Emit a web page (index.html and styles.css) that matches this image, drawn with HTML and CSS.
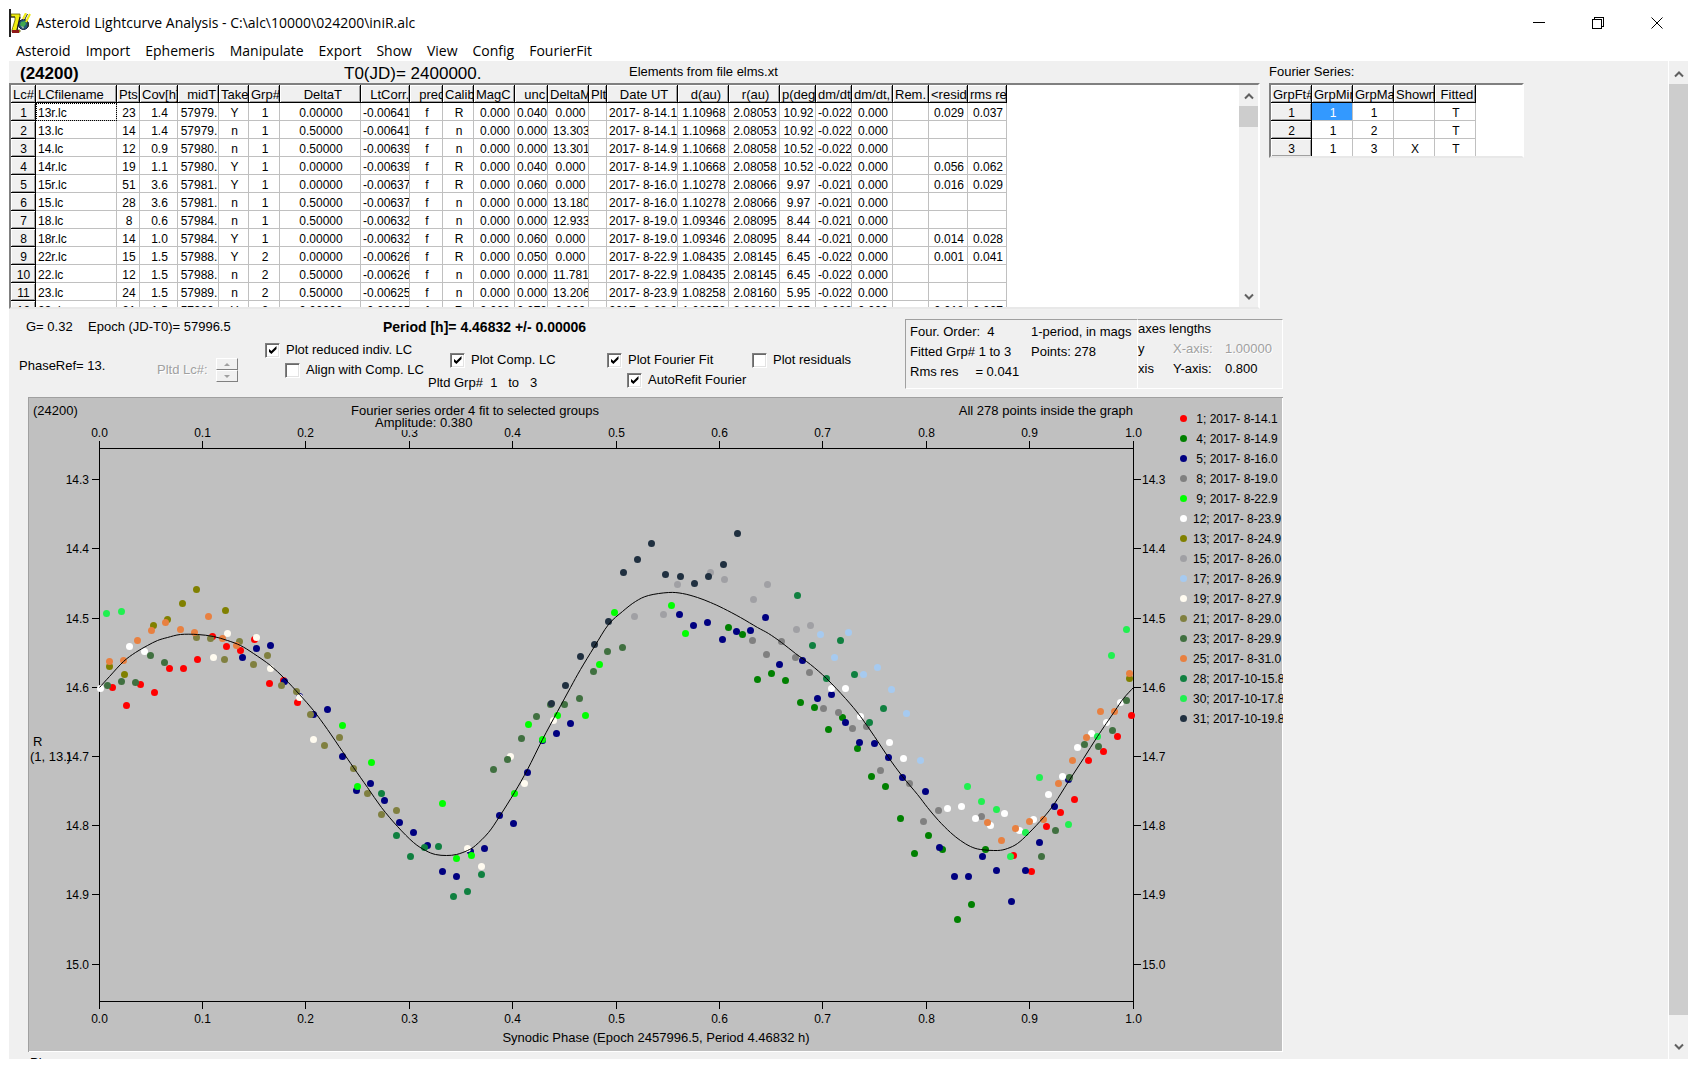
FILE: index.html
```html
<!DOCTYPE html>
<html lang="en">
<head>
<meta charset="utf-8">
<title>Asteroid Lightcurve Analysis</title>
<link rel="stylesheet" href="styles.css">
</head>
<body>
<div class="window">
  <header class="titlebar">
    <svg class="app-icon" width="20" height="20" viewBox="0 0 20 20" aria-hidden="true">
      <path d="M0 1h9v3L6 17h3v2H1v-2l3-10V4H0z" fill="#f0ec10" stroke="#606000" stroke-width=".8"/>
      <path d="M1 17h7v3H1z" fill="#901818"/>
      <path d="M2 14h4v2H2z" fill="#f0ec10"/>
      <path d="M0 4h4M6 17l3-13" fill="none" stroke="#202020" stroke-width="1.2"/>
      <circle cx="12.500" cy="11.500" r="5" fill="#205878" stroke="#101030"/>
      <path d="M10 9l4-1 1 3-3 4-3-3z" fill="#40a850"/>
      <path d="M10 13l3 1-1 2z" fill="#b0b0b0"/>
      <path d="M12 6l3-6M15 9l4-8" fill="none" stroke="#f0ec10" stroke-width="2"/>
      <path d="M13.500 7l3-6M17 9v5" fill="none" stroke="#303018" stroke-width="1"/>
    </svg>
    <h1 class="title">Asteroid Lightcurve Analysis - C:\alc\10000\024200\iniR.alc</h1>
    <div class="window-buttons">
      <button class="window-button" aria-label="Minimize"><svg width="12" height="12" viewBox="0 0 12 12"><path d="M0 5.500h12"/></svg></button>
      <button class="window-button" aria-label="Restore"><svg width="12" height="12" viewBox="0 0 12 12"><path d="M.5 2.500h9v9h-9zM2.500 2.500v-2h9v9h-2"/></svg></button>
      <button class="window-button" aria-label="Close"><svg width="12" height="12" viewBox="0 0 12 12"><path class="smooth" d="M.5.5l11 11M11.500.5l-11 11"/></svg></button>
    </div>
  </header>
  <nav class="menu">
    <button>Asteroid</button><button>Import</button><button>Ephemeris</button><button>Manipulate</button><button>Export</button><button>Show</button><button>View</button><button>Config</button><button>FourierFit</button>
  </nav>
  <div class="workspace">
    <main class="content">
      <div class="tables">
        <section class="lc-panel">
          <div class="lc-heading">
            <strong>(24200)</strong>
            <span>T0(JD)= 2400000.</span>
            <span class="elements">Elements from file elms.xt</span>
          </div>
          <div class="frame lc-frame">
            <div class="lc-view"><table class="grid lc-grid" id="lc-grid"></table></div>
            <div class="scrollbar">
              <button aria-label="Scroll up"><svg width="10" height="8" viewBox="0 0 10 8"><path d="M1 6.500l4-4 4 4"/></svg></button>
              <div class="thumb lc-thumb"></div>
              <button class="down" aria-label="Scroll down"><svg width="10" height="8" viewBox="0 0 10 8"><path d="M1 1.500l4 4 4-4"/></svg></button>
            </div>
          </div>
        </section>
        <section class="fs-panel">
          <div class="fs-heading">Fourier Series:</div>
          <div class="frame fs-frame">
            <table class="grid fs-grid">
              <thead><tr><th>GrpFt#</th><th>GrpMin</th><th>GrpMax</th><th>Shown</th><th> Fitted</th></tr></thead>
              <tbody>
                <tr><th>1</th><td class="selected">1</td><td>1</td><td></td><td>T</td></tr>
                <tr><th>2</th><td>1</td><td>2</td><td></td><td>T</td></tr>
                <tr><th>3</th><td>1</td><td>3</td><td>X</td><td>T</td></tr>
              </tbody>
            </table>
          </div>
        </section>
      </div>

      <section class="controls">
        <div class="settings">
          <div class="summary">
            <span class="g">G= 0.32</span>
            <span class="epoch">Epoch (JD-T0)= 57996.5</span>
            <strong class="period">Period [h]= 4.46832 +/- 0.00006</strong>
          </div>
          <div class="options">
            <span class="phase-ref">PhaseRef= 13.</span>
            <div class="lc-number">
              <span class="disabled">Pltd Lc#:</span>
              <div class="spinner">
                <button disabled aria-label="Next"><svg width="6" height="3" viewBox="0 0 6 3"><path d="M3 0l3 3H0z"/></svg></button>
                <button disabled aria-label="Previous"><svg width="6" height="3" viewBox="0 0 6 3"><path d="M0 0h6L3 3z"/></svg></button>
              </div>
            </div>
            <div class="stack reduced">
              <label><input type="checkbox" checked>Plot reduced indiv. LC</label>
              <label class="indent"><input type="checkbox">Align with Comp. LC</label>
            </div>
            <div class="stack lower comp">
              <label class="indent"><input type="checkbox" checked>Plot Comp. LC</label>
              <span class="groups">Pltd Grp#  1   to   3</span>
            </div>
            <div class="stack lower fourier">
              <label><input type="checkbox" checked>Plot Fourier Fit</label>
              <label class="indent"><input type="checkbox" checked>AutoRefit Fourier</label>
            </div>
            <div class="stack lower">
              <label><input type="checkbox">Plot residuals</label>
            </div>
          </div>
        </div>
        <div class="fit-info">
          <span>Four. Order:  4</span><span>1-period, in mags</span>
          <span>Fitted Grp# 1 to 3</span><span>Points: 278</span>
          <span class="rms">Rms res<span>= 0.041</span></span>
        </div>
        <div class="axes-info">
          <span class="axes-title">axes lengths</span>
          <span>y</span><span class="disabled">X-axis:</span><span class="disabled">1.00000</span>
          <span>xis</span><span>Y-axis:</span><span>0.800</span>
        </div>
      </section>

      <svg class="chart" id="chart" width="1255" height="655" viewBox="28 397 1255 655" role="img" aria-label="Composite lightcurve">
        <text x="33" y="415">(24200)</text>
        <text x="475" y="415" text-anchor="middle">Fourier series order 4 fit to selected groups</text>
        <text x="1133" y="415" text-anchor="end">All 278 points inside the graph</text>
        <g id="axes"></g>
        <rect x="372" y="415" width="102" height="15" fill="#c0c0c0"/>
        <text x="375" y="427">Amplitude: 0.380</text>
        <text x="33" y="746">R</text>
        <rect x="30" y="750" width="37" height="16" fill="#c0c0c0"/>
        <text x="30" y="761">(1, 13.)</text>
        <text x="656" y="1042" text-anchor="middle">Synodic Phase (Epoch 2457996.5, Period 4.46832 h)</text>
        <g id="points"></g>
        <path id="fit" class="fit"/>
      </svg>
      <div class="footnote">Phase</div>
    </main>
    <div class="scrollbar main-scroll">
      <button aria-label="Page up"><svg width="10" height="8" viewBox="0 0 10 8"><path d="M1 6.500l4-4 4 4"/></svg></button>
      <div class="thumb"></div>
      <button class="down" aria-label="Page down"><svg width="10" height="8" viewBox="0 0 10 8"><path d="M1 1.500l4 4 4-4"/></svg></button>
    </div>
  </div>
</div>
<script src="app.js"></script>
</body>
</html>
```
FILE: styles.css
```css
* { box-sizing: border-box; }
body {
  margin: 0;
  background: #fff;
  color: #000;
  font: 13px/16px "Liberation Sans", Arial, sans-serif;
}
button {
  margin: 0;
  padding: 0;
  border: 0;
  background: none;
  color: inherit;
  font: inherit;
}
.window {
  display: flex;
  flex-direction: column;
  height: 100vh;
  padding: 9px;
  overflow: hidden;
}

/* title bar and menu */
.titlebar {
  display: flex;
  align-items: center;
  height: 28px;
  border-left: 2px solid #222;
}
.title {
  flex: 1;
  margin: 0 0 0 5px;
  font: 14px/28px "Open Sans", "Noto Sans", sans-serif;
}
.window-buttons {
  display: flex;
  margin-right: 3px;
}
.window-button {
  display: grid;
  place-items: center;
  width: 59px;
  height: 28px;
}
.window-button path {
  fill: none;
  stroke: #000;
  shape-rendering: crispEdges;
}
.window-button .smooth { shape-rendering: auto; }
.menu {
  display: flex;
  gap: 15px;
  height: 24px;
  padding-left: 7px;
  font: 14px/28px "Open Sans", "Noto Sans", sans-serif;
}

.workspace {
  display: flex;
  flex: 1;
  min-height: 0;
  background: #f0f0f0;
}
.content {
  flex: 1;
  min-width: 0;
  overflow: hidden;
}

/* scroll bars */
.scrollbar {
  display: flex;
  flex-direction: column;
  flex: none;
  width: 19px;
  background: #f0f0f0;
}
.scrollbar button {
  display: grid;
  place-items: center;
  flex: none;
  height: 21px;
}
.scrollbar .down { margin-top: auto; }
.scrollbar path {
  fill: none;
  stroke: #606060;
  stroke-width: 2;
}
.thumb { background: #cdcdcd; }
.lc-thumb { height: 21px; }
.main-scroll {
  width: 21px;
  padding-top: 2px;
  border-left: 1px solid #fff;
  border-right: 1px solid #fff;
}
.main-scroll .thumb { flex: 1; }
.main-scroll .down {
  height: 24px;
  margin-top: 20px;
}

/* tables */
.tables {
  display: flex;
  gap: 9px;
}
.lc-panel { width: 1251px; }
.fs-panel { width: 255px; }
.lc-heading {
  display: grid;
  grid-template-columns: 324px 285px 1fr;
  height: 22px;
  padding-left: 11px;
  font-size: 17px;
  line-height: 25px;
}
.elements {
  font-size: 13px;
  line-height: 21px;
}
.fs-heading {
  height: 22px;
  line-height: 21px;
}
.frame {
  display: flex;
  background: #fff;
  border: 2px solid;
  border-color: #808080 #fff #e8e8e8 #808080;
}
.lc-frame { height: 226px; }
.fs-frame {
  height: 75px;
  overflow: hidden;
}
.lc-view {
  flex: 1;
  overflow: hidden;
}
.grid {
  border-collapse: separate;
  border-spacing: 0;
  table-layout: fixed;
  font-size: 12px;
}
.fs-grid { width: 205px; }
.lc-grid { width: 996px; }
.grid th, .grid td {
  height: 18px;
  padding: 3px 0 0 2px;
  overflow: hidden;
  font-weight: 400;
  line-height: 14px;
  text-align: center;
  white-space: pre;
  border: solid #c0c0c0;
  border-width: 0 1px 1px 0;
}
.grid th {
  padding-left: 1px;
  background: #f0f0f0;
  border-color: #000;
  box-shadow: inset 1px 1px #fff, inset -1px -1px #a0a0a0;
}
.grid thead th {
  padding-left: 2px;
  font-size: 13px;
  text-align: left;
}
.grid td.name { text-align: left; }
.grid td.delta { padding-left: 5px; }
.grid td.focus {
  outline: 1px dotted #000;
  outline-offset: -1px;
}
.grid td.selected {
  background: #3399ff;
  color: #fff;
}

/* controls */
.controls {
  display: flex;
  height: 88px;
}
.controls span, .controls label { white-space: pre; }
.settings { width: 896px; }
.summary {
  display: flex;
  padding: 10px 0 0 17px;
}
.g { width: 62px; }
.epoch { width: 295px; }
.period { font-size: 14px; }
.options {
  display: flex;
  padding: 7px 0 0 10px;
}
.phase-ref {
  width: 138px;
  padding-top: 16px;
}
.lc-number {
  display: flex;
  align-items: center;
  width: 108px;
  height: 56px;
}
.lc-number .disabled { width: 59px; }
.disabled {
  color: #a0a0a0;
  text-shadow: 1px 1px #fff;
}
.spinner { width: 22px; }
.spinner button {
  display: grid;
  place-items: center;
  width: 22px;
  height: 12px;
  border: 1px solid;
  border-color: #fff #808080 #808080 #fff;
}
.spinner path { fill: #a0a0a0; }
.stack {
  display: flex;
  flex-direction: column;
  gap: 4px;
}
.lower { padding-top: 10px; }
.reduced { width: 163px; }
.comp { width: 179px; }
.fourier { width: 145px; }
.indent { padding-left: 20px; }
.groups { padding-top: 3px; }
.comp .indent { padding-left: 22px; }
.stack label {
  display: flex;
  align-items: center;
  gap: 6px;
  height: 16px;
}
input[type="checkbox"] {
  flex: none;
  display: grid;
  place-items: center;
  width: 15px;
  height: 15px;
  margin: 0;
  appearance: none;
  background: #fff;
  border: 1px solid;
  border-color: #808080 #fff #fff #808080;
  box-shadow: inset 1px 1px #696969, inset -1px -1px #e3e3e3;
}
input[type="checkbox"]:checked::after {
  content: "";
  width: 8px;
  height: 8px;
  background: #000;
  clip-path: polygon(0 30%, 36% 62%, 100% 0, 100% 38%, 36% 100%, 0 68%);
}
.fit-info, .axes-info {
  display: grid;
  align-content: start;
  height: 70px;
  margin-top: 10px;
  border: 1px solid;
  border-color: #a0a0a0 #fff #fff #a0a0a0;
}
.fit-info {
  grid-template-columns: 121px 1fr;
  row-gap: 4px;
  width: 233px;
  padding: 4px 0 0 4px;
}
.rms { display: flex; }
.rms span { margin-left: 17px; }
.axes-info {
  grid-template-columns: 35px 52px 1fr;
  row-gap: 4px;
  width: 145px;
  padding-top: 1px;
  border-left: 0;
}
.axes-title { grid-column: 1 / -1; }

/* chart */
.chart {
  display: block;
  margin-left: 19px;
  background: #c0c0c0;
  box-shadow: inset 1px 1px #a0a0a0, inset -1px -1px #fff;
  font-size: 13px;
}
.chart text { white-space: pre; }
.chart .legend, .chart .tick { font-size: 12px; }
.axis {
  fill: none;
  stroke: #000;
  shape-rendering: crispEdges;
}
.fit {
  fill: none;
  stroke: #000;
}
.footnote { padding: 3px 0 0 21px; }
```
FILE: app.js
```js
const widths = [25, 81, 23, 38, 41, 30, 31, 81, 49, 33, 31, 41, 33, 41, 18, 71, 51, 51, 36, 36, 41, 36, 39, 39];
const heads = ["Lc#", "LCfilename", "Pts", "Cov[h]", "  midT", "Take", "Grp#", "      DeltaT", "  LtCorr.", "  pred", "Calib", "MagC", "  unc", "DeltaMag", "Plt", "   Date UT", "   d(au)", "   r(au)", "p(deg)", "dm/dt", "dm/dt,", "Rem.", "<resid>", "rms res"];
const rows = [
  "1|13r.lc|23|1.4|57979.|Y|1|0.00000|-0.00641|f|R|0.000|0.040|0.000||2017- 8-14.1|1.10968|2.08053|10.92|-0.022|0.000||0.029|0.037",
  "2|13.lc|14|1.4|57979.|n|1|0.50000|-0.00641|f|n|0.000|0.000|13.303||2017- 8-14.1|1.10968|2.08053|10.92|-0.022|0.000|||",
  "3|14.lc|12|0.9|57980.|n|1|0.50000|-0.00639|f|n|0.000|0.000|13.301||2017- 8-14.9|1.10668|2.08058|10.52|-0.022|0.000|||",
  "4|14r.lc|19|1.1|57980.|Y|1|0.00000|-0.00639|f|R|0.000|0.040|0.000||2017- 8-14.9|1.10668|2.08058|10.52|-0.022|0.000||0.056|0.062",
  "5|15r.lc|51|3.6|57981.|Y|1|0.00000|-0.00637|f|R|0.000|0.060|0.000||2017- 8-16.0|1.10278|2.08066|9.97|-0.021|0.000||0.016|0.029",
  "6|15.lc|28|3.6|57981.|n|1|0.50000|-0.00637|f|n|0.000|0.000|13.180||2017- 8-16.0|1.10278|2.08066|9.97|-0.021|0.000|||",
  "7|18.lc|8|0.6|57984.|n|1|0.50000|-0.00632|f|n|0.000|0.000|12.933||2017- 8-19.0|1.09346|2.08095|8.44|-0.021|0.000|||",
  "8|18r.lc|14|1.0|57984.|Y|1|0.00000|-0.00632|f|R|0.000|0.060|0.000||2017- 8-19.0|1.09346|2.08095|8.44|-0.021|0.000||0.014|0.028",
  "9|22r.lc|15|1.5|57988.|Y|2|0.00000|-0.00626|f|R|0.000|0.050|0.000||2017- 8-22.9|1.08435|2.08145|6.45|-0.022|0.000||0.001|0.041",
  "10|22.lc|12|1.5|57988.|n|2|0.50000|-0.00626|f|n|0.000|0.000|11.781||2017- 8-22.9|1.08435|2.08145|6.45|-0.022|0.000|||",
  "11|23.lc|24|1.5|57989.|n|2|0.50000|-0.00625|f|n|0.000|0.000|13.206||2017- 8-23.9|1.08258|2.08160|5.95|-0.022|0.000|||",
  "12|23r.lc|21|1.5|57989.|Y|2|0.00000|-0.00625|f|R|0.000|0.070|0.000||2017- 8-23.9|1.08258|2.08160|5.95|-0.022|0.000||0.018|0.027"
];
const esc = s => s.replace("<", "&lt;").replace(/>/g, "&gt;");
const cell = (text, i, r) => {
  if (i === 0) return `<th scope="row">${text}</th>`;
  let cls = i === 1 ? "name" : i === 13 ? "delta" : "";
  if (i === 1 && r === 0) cls += " focus";
  return `<td class="${cls}">${text}</td>`;
};
document.getElementById("lc-grid").innerHTML =
  `<colgroup>${widths.map(w => `<col style="width:${w}px">`).join("")}</colgroup>` +
  `<thead><tr>${heads.map(h => `<th>${esc(h).replace("&lt;resid&gt;", "&lt;resid&gt;")}</th>`).join("")}</tr></thead>` +
  `<tbody>${rows.map((row, r) => `<tr>${row.split("|").map((t, i) => cell(t, i, r)).join("")}</tr>`).join("")}</tbody>`;

/* axes */
const left = 99.5, right = 1133.5, upper = 448.5, lower = 1001.5;
let line = `M${left} ${upper}H${right}V${lower}H${left}Z`;
let labels = "";
for (let i = 0; i <= 10; i++) {
  const x = Math.floor(99 + i * 103.4) + 0.5;
  const t = (i / 10).toFixed(1);
  line += `M${x} 441V448M${x} 1002V1009`;
  labels += `<text class="tick" x="${x}" y="437" text-anchor="middle">${t}</text><text class="tick" x="${x}" y="1023" text-anchor="middle">${t}</text>`;
}
for (let i = 0; i < 8; i++) {
  const y = Math.floor(479.6 + i * 69.2) + 0.5;
  const t = (14.3 + i / 10).toFixed(1);
  line += `M92 ${y}H99M1134 ${y}H1141`;
  labels += `<text class="tick" x="89" y="${y + 4.5}" text-anchor="end">${t}</text><text class="tick" x="1142" y="${y + 4.5}">${t}</text>`;
}

/* observed points, one entry per session */
const series = [
  ["#ff0000", " 1; 2017- 8-14.1", "112,687 126,705 140,684 154,692 169,668 183,668 197,659 212,636 226,646 240,650 254,639 269,683 283,680 297,702 1013,855 1031,871 1046,826 1060,812 1074,799 1088,760 1103,751 1117,736 1131,715"],
  ["#008000", " 4; 2017- 8-14.9", "728,627 742,634 757,679 771,673 785,680 800,702 814,707 828,729 842,717 857,748 871,776 885,786 900,818 914,853 928,835 942,849 957,919 971,904 985,849"],
  ["#000080", " 5; 2017- 8-16.0", "242,657 256,648 270,645 284,681 299,696 313,714 327,709 342,756 356,790 370,783 384,800 399,822 413,832 427,845 442,871 456,876 470,851 484,848 499,815 513,823 527,772 542,740 556,733 570,723 679,614 693,625 707,622 722,639 736,631 750,630 765,617 779,664 802,660 817,698 831,694 845,722 859,742 874,743 888,757 902,777 925,791 939,847 954,876 968,876 982,856 996,870 1011,901 1025,870 1039,842 1054,806 1068,779"],
  ["#808080", " 8; 2017- 8-19.0", "752,640 766,654 781,641 795,657 809,672 823,708 838,712 852,728 866,726 880,770 909,783 923,821 938,810 981,816"],
  ["#00ff00", " 9; 2017- 8-22.9", "342,725 357,786 371,762 442,803 456,858 471,855 514,793 528,724 542,739 557,715 585,715 599,664 614,612 671,605 685,633"],
  ["#ffffff", "12; 2017- 8-23.9", "100,688 129,646 144,651 831,688 845,688 860,716 889,742 903,758 947,808 961,806 975,818 990,825 1004,813 1019,830 1033,819 1048,794 1062,776 1077,747 1091,733 1106,722 1120,702"],
  ["#808000", "13; 2017- 8-24.9", "109,666 124,674 153,625 167,619 182,603 196,589 225,610 1129,678"],
  ["#a0a0a4", "15; 2017- 8-26.0", "634,616 663,614 677,584 710,572 724,579 753,599 767,584 796,629 810,625"],
  ["#a6caf0", "17; 2017- 8-26.9", "820,634 834,657 848,632 863,674 877,667 891,689 906,713 920,760"],
  ["#fffbf0", "19; 2017- 8-27.9", "213,657 227,633 256,637 270,668 299,697 313,739 467,848 481,866 510,756 524,783 553,720"],
  ["#808040", "21; 2017- 8-29.0", "196,637 210,638 224,659 239,641 253,664 267,655 281,685 296,691 310,714 324,745 339,737 353,768 367,793 381,814 396,810"],
  ["#407040", "23; 2017- 8-29.9", "107,685 121,681 135,682 150,655 164,662 493,769 507,759 521,738 536,716 550,704 564,704 579,698 593,671 607,651 622,647 1041,856 1055,830 1069,777 1084,744 1098,746 1112,730 1126,700"],
  ["#e88040", "25; 2017- 8-31.0", "109,661 123,660 137,640 151,630 165,622 180,629 194,632 208,616 222,638 236,645 987,822 1001,840 1015,828 1029,821 1043,819 1058,783 1072,760 1086,737 1100,711 1114,711 1129,673"],
  ["#108040", "28; 2017-10-15.8", "381,793 396,835 410,856 424,847 438,846 453,896 467,891 481,874 797,595 812,645 826,678 840,640 854,674 869,722 883,708"],
  ["#20f050", "30; 2017-10-17.8", "106,613 121,611 967,786 981,801 996,809 1010,856 1025,832 1039,777 1068,824 1097,736 1111,655 1126,629"],
  ["#203040", "31; 2017-10-19.8", "551,703 565,685 580,656 594,644 608,621 623,572 637,559 651,543 665,574 680,576 694,583 708,576 723,564 737,533"]
];
let dots = "";
series.forEach(([color, label, data], i) => {
  const y = 418 + i * 20;
  labels += `<text class="legend" x="1193" y="${y + 5}">${label}</text>`;
  dots += `<g fill="${color}"><circle cx="1183.5" cy="${y + 0.5}" r="3.5"/>` +
    data.split(" ").map(p => p.split(",")).map(([px, py]) => `<circle cx="${px}.5" cy="${py}.5" r="3.5"/>`).join("") + "</g>";
});
document.getElementById("axes").innerHTML = `<path class="axis" d="${line}"/>${labels}`;
document.getElementById("points").innerHTML = dots;

/* order 4 fit, drawn as a smooth curve through its samples */
const fit = "99,687 109,676 123,661 135,652 147,645 157,640 167,637 180,634 197,634 213,636 227,640 240,645 253,653 270,665 284,678 299,694 313,710 327,729 342,751 353,767 367,787 381,807 397,826 413,842 425,850 435,854 446,855 456,854 467,850 475,845 488,832 499,816 514,792 527,769 542,739 557,711 570,687 580,669 594,646 608,624 622,611 635,601 648,595 668,592 682,593 697,597 710,602 723,608 740,617 757,627 768,633 781,642 795,653 810,664 826,678 845,698 860,716 874,736 888,757 902,776 917,794 927,807 938,820 950,832 960,840 970,846 980,849 997,850 1007,848 1017,843 1028,833 1043,817 1054,803 1068,781 1083,758 1097,736 1114,711 1123,698 1133,687"
  .split(" ").map(p => p.split(",").map(v => +v + 0.5));
let d = `M${fit[0]}`;
for (let i = 0; i < fit.length - 1; i++) {
  const a = fit[i - 1] || fit[i], b = fit[i], c = fit[i + 1], e = fit[i + 2] || c;
  d += `C${b[0] + (c[0] - a[0]) / 6} ${b[1] + (c[1] - a[1]) / 6} ${c[0] - (e[0] - b[0]) / 6} ${c[1] - (e[1] - b[1]) / 6} ${c[0]} ${c[1]}`;
}
document.getElementById("fit").setAttribute("d", d);
```
